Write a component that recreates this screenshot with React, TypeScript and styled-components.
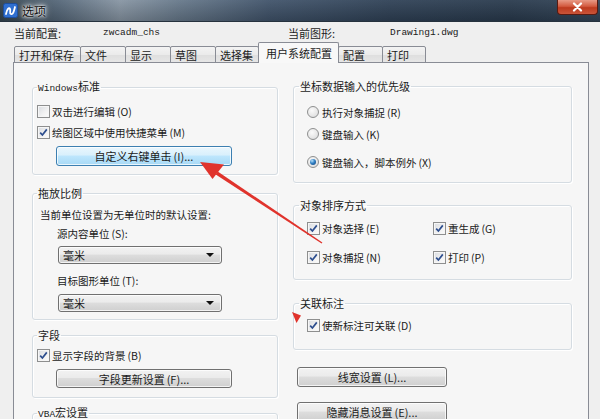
import styled, { createGlobalStyle } from "styled-components";

const GlobalStyle = createGlobalStyle`
  html, body {
    margin: 0;
    padding: 0;
    background: #efefef;
  }
  body {
    font-family: "Noto Sans CJK SC", "Noto Sans", sans-serif;
    font-size: 10.5px;
    color: #1b1b1b;
  }
`

const Window = styled.div`
    position: relative;
    width: 600px;
    height: 419px;
    overflow: hidden;
    background: #efefef;
`
const TitleBar = styled.div`
    height: 21px;
    display: flex;
    align-items: center;
    padding-left: 3px;
    border-bottom: 1px solid #26323e;
    background:
        linear-gradient(180deg, rgba(255,255,255,0.06), rgba(0,0,0,0.18)),
        linear-gradient(90deg, #34444f 0%, #56687a 10%, #8795a3 20%, #66788a 30%, #40536a 45%, #2f4156 65%, #293a4d 85%, #324457 100%);
`
const Title = styled.span`
    margin-left: 4px;
    font-size: 12px;
    color: #101010;
    text-shadow: 0 0 4px #fff, 0 0 7px #fff, 0 0 2px #fff;
`
const CloseBox = styled.div`
    margin-left: auto;
    margin-right: 2px;
    align-self: flex-start;
    width: 39px;
    height: 14px;
    display: flex;
    align-items: center;
    justify-content: center;
    border: 1px solid #5a1a10;
    border-top: none;
    border-radius: 0 0 4px 4px;
    background: linear-gradient(180deg, #e89a86 0%, #d35a3f 45%, #bd3a1e 55%, #c9553a 100%);
`
const InfoBar = styled.div`
    height: 21px;
    display: flex;
    align-items: center;
    padding-left: 14px;
`
const InfoItem = styled.div<{ $w: number }>`
    display: flex;
    align-items: center;
    width: ${p => p.$w}px;
    white-space: nowrap;
`
const InfoLabel = styled.span<{ $w: number }>`
    width: ${p => p.$w}px;
    font-size: 11px;
`
const Mono = styled.span`
    font-family: "Liberation Mono", "DejaVu Sans Mono", monospace;
    font-size: 9.5px;
`
const TabStrip = styled.div`
    height: 20px;
    display: flex;
    align-items: flex-end;
    padding-left: 14px;
    margin-bottom: -1px;
    position: relative;
    z-index: 1;
`
const Tab = styled.div<{ $w: number; $active?: boolean }>`
    width: ${p => p.$w}px;
    height: ${p => (p.$active ? 21 : 17)}px;
    box-sizing: border-box;
    display: flex;
    align-items: center;
    padding-left: ${p => (p.$active ? 7 : 4)}px;
    font-size: 11px;
    white-space: nowrap;
    border: 1px solid #898c95;
    border-bottom: ${p => (p.$active ? "none" : "1px solid #898c95")};
    margin-right: -1px;
    border-radius: 2px 2px 0 0;
    background: ${p => (p.$active ? "#f8f8f8" : "linear-gradient(180deg, #f3f3f3 0%, #ebebeb 50%, #dedede 51%, #e6e6e6 100%)")};
    position: relative;
    z-index: ${p => (p.$active ? 2 : 1)};
`
const Panel = styled.div`
    margin-left: 13px;
    width: 576px;
    height: 420px;
    box-sizing: border-box;
    border: 1px solid #898c95;
    background: #f6f6f6;
    padding: 16px 16px 0 18px;
    display: flex;
    gap: 15px;
`
const Column = styled.div<{ $w: number }>`
    width: ${p => p.$w}px;
    display: flex;
    flex-direction: column;
`
const Group = styled.fieldset<{ $mt?: number; $pt: number; $pb: number }>`
    margin: ${p => p.$mt ?? 0}px 0 0 0;
    padding: ${p => p.$pt}px 0 ${p => p.$pb}px 0;
    min-width: 0;
    border: 1px solid #d5dce2;
    border-radius: 3px;
    box-shadow: inset 1px 1px 0 #fff, 1px 1px 0 #fff;
`
const Legend = styled.legend<{ $ml?: number }>`
    margin-left: ${p => p.$ml ?? 4}px;
    padding: 0 1px;
    line-height: 14px;
    font-size: 11px;
    white-space: nowrap;
`
const Row = styled.div<{ $h?: number; $mt?: number; $ml?: number }>`
    display: flex;
    align-items: center;
    height: ${p => p.$h ?? 21}px;
    margin-top: ${p => p.$mt ?? 0}px;
    margin-left: ${p => p.$ml ?? 0}px;
    white-space: nowrap;
`
const Cell = styled.div<{ $w?: number }>`
    display: flex;
    align-items: center;
    width: ${p => (p.$w ? `${p.$w}px` : "auto")};
`
const Box = styled.span`
    width: 13px;
    height: 13px;
    box-sizing: border-box;
    margin-right: 2px;
    display: flex;
    align-items: center;
    justify-content: center;
    border: 1px solid #8e8f8f;
    background: linear-gradient(135deg, #d8dbe0 0%, #f2f2f2 60%, #fcfcfc 100%);
    box-shadow: inset 0 0 0 1px #f6f6f6;
`
const Radio = styled.span<{ $on?: boolean }>`
    width: 12px;
    height: 12px;
    box-sizing: border-box;
    margin-right: 3px;
    border-radius: 50%;
    display: flex;
    align-items: center;
    justify-content: center;
    border: 1px solid #8e8f8f;
    background: radial-gradient(circle at 40% 35%, #fafafa 0%, #e6e6e6 60%, #cfd2d6 100%);
    &::after {
        content: "";
        display: ${p => (p.$on ? "block" : "none")};
        width: 6px;
        height: 6px;
        border-radius: 50%;
        background: radial-gradient(circle at 35% 30%, #b7e1fb 0%, #2f7fc4 45%, #123f73 100%);
    }
`
const Key = styled.span`
    margin-left: 2px;
`
const Button = styled.button<{ $w: number; $h?: number; $ml?: number; $mt?: number; $focus?: boolean }>`
    display: block;
    box-sizing: border-box;
    width: ${p => p.$w}px;
    height: ${p => p.$h ?? 20}px;
    margin: ${p => p.$mt ?? 0}px 0 0 ${p => p.$ml ?? 0}px;
    padding: 0;
    font-family: inherit;
    font-size: 11px;
    color: #1b1b1b;
    border: 1px solid ${p => (p.$focus ? "#3c7fb1" : "#707070")};
    border-radius: 3px;
    background: ${p => (p.$focus
        ? "linear-gradient(180deg, #eaf6fd 0%, #d9f0fc 45%, #bee6fd 50%, #a7d9f5 100%)"
        : "linear-gradient(180deg, #f2f2f2 0%, #ebebeb 45%, #dddddd 50%, #cfcfcf 100%)")};
    box-shadow: inset 0 0 0 1px rgba(255, 255, 255, 0.75);
`
const Select = styled.div<{ $mt?: number }>`
    display: flex;
    align-items: center;
    justify-content: space-between;
    box-sizing: border-box;
    width: 164px;
    height: 18px;
    margin: ${p => p.$mt ?? 0}px 0 0 25px;
    padding: 0 7px 0 4px;
    font-size: 11px;
    border: 1px solid #707070;
    border-radius: 3px;
    background: linear-gradient(180deg, #f2f2f2 0%, #ebebeb 45%, #dddddd 50%, #cfcfcf 100%);
    box-shadow: inset 0 0 0 1px rgba(255, 255, 255, 0.75);
`
const Caret = styled.span`
    width: 0;
    height: 0;
    border-left: 4px solid transparent;
    border-right: 4px solid transparent;
    border-top: 4px solid #111;
`
const Overlay = styled.svg`
    position: absolute;
    left: 0;
    top: 0;
    pointer-events: none;
`

function Check({ on }: { on?: boolean }) {
    return (
        <Box>
            {on ? (
                <svg width="9" height="9" viewBox="0 0 9 9">
                    <path d="M1.2 4.6 L3.4 7 L7.8 1.4" fill="none" stroke="#2d4e8e" strokeWidth="1.7" />
                </svg>
            ) : null}
        </Box>
    )
}

const tabs = [
    { label: "打开和保存", w: 67 },
    { label: "文件", w: 46 },
    { label: "显示", w: 46 },
    { label: "草图", w: 46 },
    { label: "选择集", w: 44 },
    { label: "用户系统配置", w: 81, active: true },
    { label: "配置", w: 45 },
    { label: "打印", w: 44 },
]

function App() {
    return (
        <Window>
            <GlobalStyle />
            <TitleBar>
                <svg width="15" height="15" viewBox="0 0 15 15">
                    <rect x="0.5" y="0.5" width="14" height="14" rx="2" fill="#2f6fd0" stroke="#1d4f9e" />
                    <path d="M3 11 C4 6, 6 4, 7 6 C8 8, 6 10, 8 11 C10 12, 11 8, 12 4" fill="none" stroke="#fff" strokeWidth="1.8" strokeLinecap="round" />
                </svg>
                <Title>选项</Title>
                <CloseBox>
                    <svg width="11" height="10" viewBox="0 0 11 10">
                        <path d="M2 1.5 L9 8.5 M9 1.5 L2 8.5" stroke="#fff" strokeWidth="2.2" strokeLinecap="round" />
                    </svg>
                </CloseBox>
            </TitleBar>

            <InfoBar>
                <InfoItem $w={274}>
                    <InfoLabel $w={89}>当前配置:</InfoLabel>
                    <Mono>zwcadm_chs</Mono>
                </InfoItem>
                <InfoItem $w={280}>
                    <InfoLabel $w={102}>当前图形:</InfoLabel>
                    <Mono>Drawing1.dwg</Mono>
                </InfoItem>
            </InfoBar>

            <TabStrip>
                {tabs.map(t => (
                    <Tab key={t.label} $w={t.w} $active={t.active}>{t.label}</Tab>
                ))}
            </TabStrip>

            <Panel>
                <Column $w={246}>
                    <Group $pt={5} $pb={8}>
                        <Legend><Mono>Windows</Mono>标准</Legend>
                        <Row $ml={4}><Check />双击进行编辑<Key>(O)</Key></Row>
                        <Row $ml={4}><Check on />绘图区域中使用快捷菜单<Key>(M)</Key></Row>
                        <Button $w={176} $ml={23} $mt={3} $focus>自定义右键单击<Key>(I)</Key>...</Button>
                    </Group>

                    <Group $mt={11} $pt={5} $pb={7}>
                        <Legend>拖放比例</Legend>
                        <Row $h={19} $ml={7}>当前单位设置为无单位时的默认设置:</Row>
                        <Row $h={19} $ml={24}>源内容单位<Key>(S)</Key>:</Row>
                        <Select $mt={3}>毫米<Caret /></Select>
                        <Row $h={19} $mt={7} $ml={24}>目标图形单位<Key>(T)</Key>:</Row>
                        <Select $mt={4}>毫米<Caret /></Select>
                    </Group>

                    <Group $mt={8} $pt={3} $pb={9}>
                        <Legend>字段</Legend>
                        <Row $ml={4}><Check on />显示字段的背景<Key>(B)</Key></Row>
                        <Button $w={176} $h={19} $ml={23} $mt={3}>字段更新设置<Key>(F)</Key>...</Button>
                    </Group>

                    <Group $mt={7} $pt={20} $pb={10}>
                        <Legend><Mono>VBA</Mono>宏设置</Legend>
                    </Group>
                </Column>

                <Column $w={279}>
                    <Group $pt={8} $pb={9}>
                        <Legend $ml={5}>坐标数据输入的优先级</Legend>
                        <Row $h={22} $ml={13}><Radio />执行对象捕捉<Key>(R)</Key></Row>
                        <Row $h={22} $ml={13}><Radio />键盘输入<Key>(K)</Key></Row>
                        <Row $h={22} $mt={6} $ml={13}><Radio $on />键盘输入，脚本例外<Key>(X)</Key></Row>
                    </Group>

                    <Group $mt={15} $pt={5} $pb={11}>
                        <Legend $ml={5}>对象排序方式</Legend>
                        <Row $h={22} $ml={13}>
                            <Cell $w={126}><Check on />对象选择<Key>(E)</Key></Cell>
                            <Cell><Check on />重生成<Key>(G)</Key></Cell>
                        </Row>
                        <Row $h={22} $mt={7} $ml={13}>
                            <Cell $w={126}><Check on />对象捕捉<Key>(N)</Key></Cell>
                            <Cell><Check on />打印<Key>(P)</Key></Cell>
                        </Row>
                    </Group>

                    <Group $mt={16} $pt={4} $pb={13}>
                        <Legend $ml={5}>关联标注</Legend>
                        <Row $h={22} $ml={13}><Check on />使新标注可关联<Key>(D)</Key></Row>
                    </Group>

                    <Button $w={150} $ml={4} $mt={17}>线宽设置<Key>(L)</Key>...</Button>
                    <Button $w={150} $ml={4} $mt={15}>隐藏消息设置<Key>(E)</Key>...</Button>
                </Column>
            </Panel>

            <Overlay width="600" height="419" viewBox="0 0 600 419">
                <polygon points="322.4,242.4 321.6,243.6 215.7,174.5 217.7,171.5" fill="#e0332c" />
                <polygon points="200,162 224,164.5 212.5,179" fill="#e0332c" />
                <polygon points="292,312 301,315.5 296.5,323" fill="#e0332c" />
            </Overlay>
        </Window>
    )
}

export default App;
